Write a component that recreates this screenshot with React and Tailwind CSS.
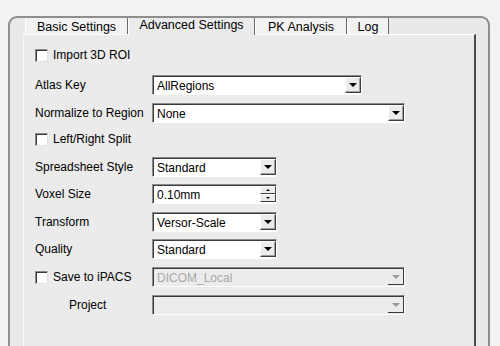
import React from "react";

const FONT = { fontFamily: '"Liberation Sans", Arial, sans-serif' };

function Arrow({ disabled }) {
  return (
    <div
      className={
        disabled
          ? "w-0 h-0 border-l-[4px] border-r-[4px] border-t-[4px] border-l-transparent border-r-transparent border-t-[#9a9a9a]"
          : "w-0 h-0 border-l-[4px] border-r-[4px] border-t-[4px] border-l-transparent border-r-transparent border-t-black"
      }
    />
  );
}

function DropButton({ disabled }) {
  if (disabled) {
    return (
      <div className="w-[16px] h-[16px] self-center flex items-center justify-center bg-[#ececec] border-b border-r border-b-[#3a3a3a] border-r-[#3a3a3a]">
        <Arrow disabled />
      </div>
    );
  }
  return (
    <div className="w-[16px] h-[16px] self-center flex items-center justify-center bg-[#ececec] border border-t-white border-l-white border-b-[#404040] border-r-[#404040] shadow-[inset_-1px_-1px_0_#a0a0a0]">
      <Arrow />
    </div>
  );
}

function Select({ width, value, disabled }) {
  return (
    <div
      className={`flex h-[20px] ${width} border border-t-[#8a8a8a] border-l-[#8a8a8a] border-b-white border-r-white shadow-[inset_1px_1px_0_#3a3a3a] ${
        disabled ? "bg-[#ececec]" : "bg-white"
      }`}
    >
      <div
        className={`flex-1 flex items-center pl-[4px] pt-px text-[12px] ${
          disabled ? "text-[#a8a8a8]" : "text-black"
        }`}
      >
        {value}
      </div>
      <DropButton disabled={disabled} />
    </div>
  );
}

function Spinner({ value }) {
  return (
    <div className="flex h-[20px] w-[125px] bg-white border border-t-[#8a8a8a] border-l-[#8a8a8a] border-b-white border-r-white shadow-[inset_1px_1px_0_#3a3a3a]">
      <div className="flex-1 flex items-center pl-[4px] pt-px text-[12px] text-black">{value}</div>
      <div className="flex flex-col self-center w-[16px] h-[16px]">
        <div className="h-[8px] flex items-center justify-center bg-[#ececec] border border-t-white border-l-white border-b-[#404040] border-r-[#404040]">
          <div className="w-0 h-0 border-l-[2px] border-r-[2px] border-b-[2px] border-l-transparent border-r-transparent border-b-black" />
        </div>
        <div className="h-[8px] flex items-center justify-center bg-[#ececec] border border-t-white border-l-white border-b-[#404040] border-r-[#404040]">
          <div className="w-0 h-0 border-l-[2px] border-r-[2px] border-t-[2px] border-l-transparent border-r-transparent border-t-black" />
        </div>
      </div>
    </div>
  );
}

function Checkbox() {
  return (
    <div className="w-[13px] h-[13px] bg-white border border-t-[#8a8a8a] border-l-[#8a8a8a] border-b-[#e0e0e0] border-r-[#e0e0e0] shadow-[inset_1px_1px_0_#3a3a3a]" />
  );
}

function CheckRow({ label, className }) {
  return (
    <div className={`flex items-center h-[20px] ${className}`}>
      <Checkbox />
      <span className="ml-[5px] text-[12px] text-black">{label}</span>
    </div>
  );
}

function FieldRow({ label, className, children, indent }) {
  return (
    <div className={`flex items-center h-[20px] ${className}`}>
      <div className={`w-[117px] text-[12px] text-black ${indent ? "pl-[34px]" : ""}`}>{label}</div>
      {children}
    </div>
  );
}

const tabs = [
  { name: "Basic Settings", w: "w-[103px]" },
  { name: "Advanced Settings", w: "w-[127px]", active: true },
  { name: "PK Analysis", w: "w-[92px]" },
  { name: "Log", w: "w-[42px]" },
];

export default function App() {
  return (
    <div className="w-[500px] h-[346px] overflow-hidden bg-[#f3f3f3] pt-[16px] pl-[8px]" style={FONT}>
      <div className="w-[482px] h-[360px] flex flex-col rounded-t-[9px] border-2 border-b-0 border-[#8e8e8e] bg-[#e9e9e9]">
        {/* tab strip */}
        <div className="flex h-[16px] ml-[15px]">
          {tabs.map((t) =>
            t.active ? (
              <div
                key={t.name}
                className={`${t.w} relative z-10 -mb-px flex justify-center pt-0 text-[12.5px] leading-[15px] text-black bg-[#ebebeb] border-l border-l-white border-r border-r-[#6a6a6a]`}
              >
                {t.name}
              </div>
            ) : (
              <div
                key={t.name}
                className={`${t.w} flex justify-center pt-[2px] text-[12.5px] leading-[14px] text-black bg-[#f2f2f2] border-l border-l-white border-r border-r-[#6a6a6a]`}
              >
                {t.name}
              </div>
            )
          )}
        </div>

        {/* page panel */}
        <div className="flex-1 ml-[13px] mr-[12px] bg-[#ebebeb] border-t border-l border-t-white border-l-[#f8f8f8] border-r-2 border-r-[#4a4a4a] pl-[11px] pt-[10px] flex flex-col">
          <CheckRow label="Import 3D ROI" />
          <FieldRow label="Atlas Key" className="mt-[10px]">
            <Select width="w-[210px]" value="AllRegions" />
          </FieldRow>
          <FieldRow label="Normalize to Region" className="mt-[8px]">
            <Select width="w-[253px]" value="None" />
          </FieldRow>
          <CheckRow label="Left/Right Split" className="mt-[6px]" />
          <FieldRow label="Spreadsheet Style" className="mt-[8px]">
            <Select width="w-[125px]" value="Standard" />
          </FieldRow>
          <FieldRow label="Voxel Size" className="mt-[7px]">
            <Spinner value="0.10mm" />
          </FieldRow>
          <FieldRow label="Transform" className="mt-[8px]">
            <Select width="w-[125px]" value="Versor-Scale" />
          </FieldRow>
          <FieldRow label="Quality" className="mt-[7px]">
            <Select width="w-[125px]" value="Standard" />
          </FieldRow>
          <div className="flex items-center h-[20px] mt-[8px]">
            <div className="w-[117px] flex items-center">
              <Checkbox />
              <span className="ml-[5px] text-[12px] text-black">Save to iPACS</span>
            </div>
            <Select width="w-[253px]" value="DICOM_Local" disabled />
          </div>
          <FieldRow label="Project" className="mt-[8px]" indent>
            <Select width="w-[253px]" value="" disabled />
          </FieldRow>
        </div>
      </div>
    </div>
  );
}
